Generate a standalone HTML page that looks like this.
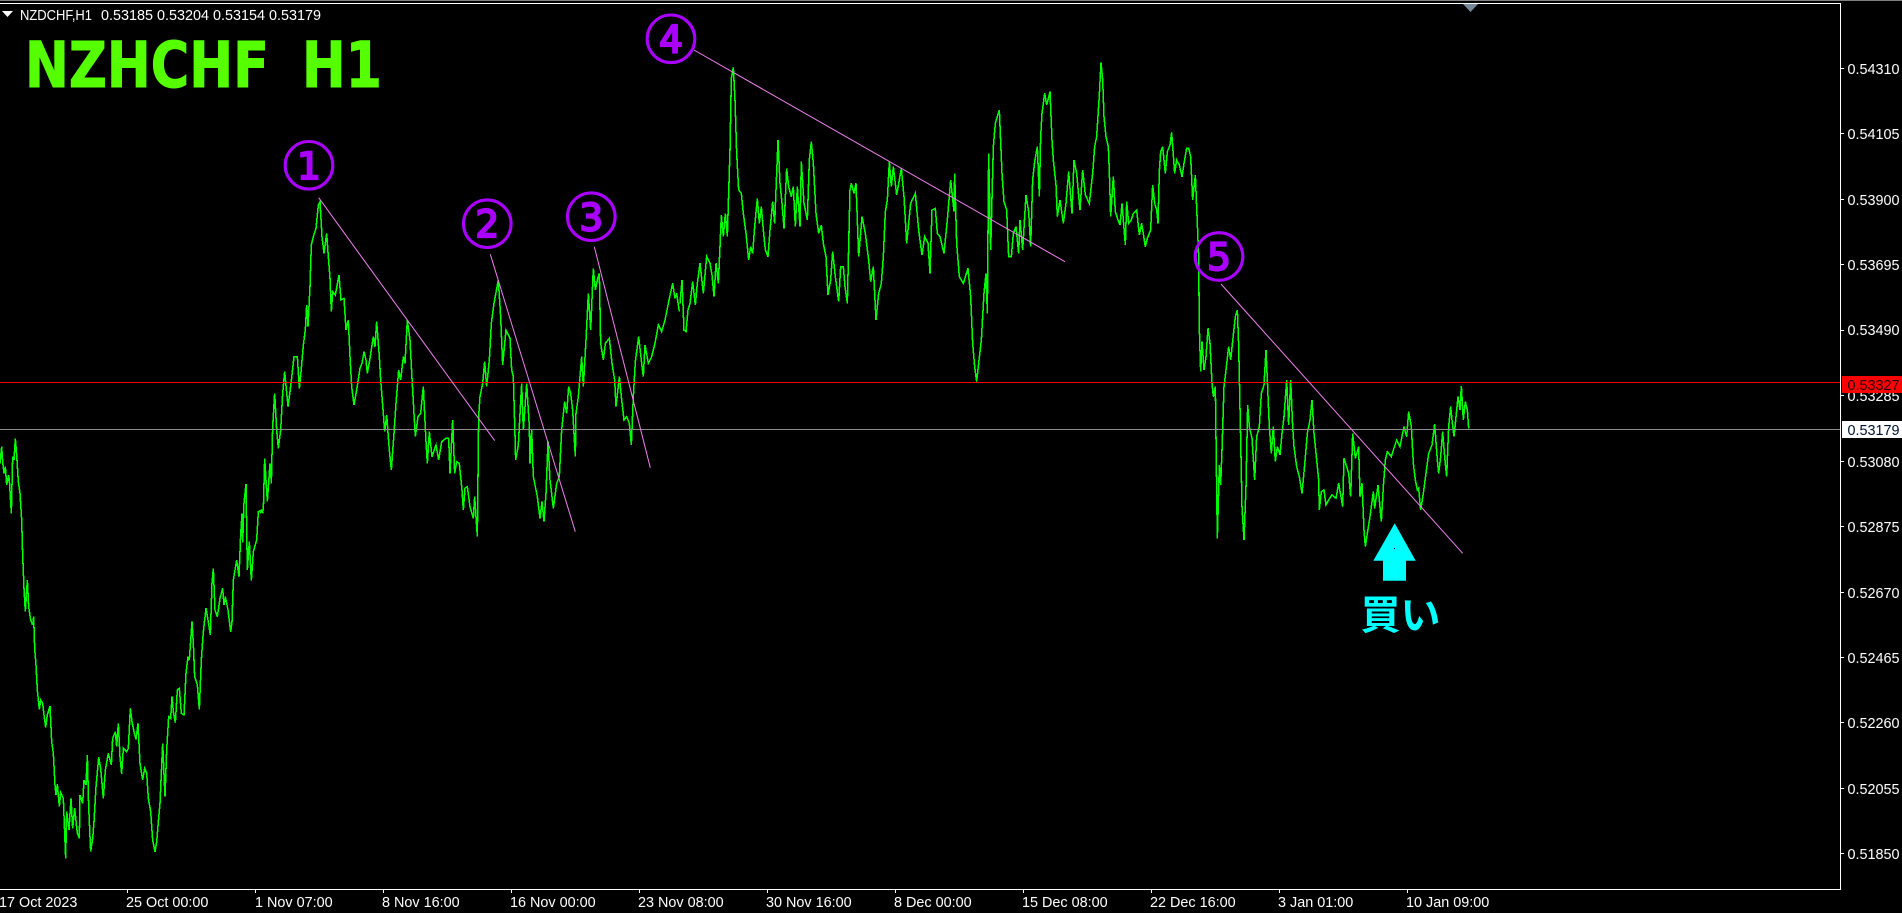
<!DOCTYPE html>
<html>
<head>
<meta charset="utf-8">
<title>NZDCHF,H1</title>
<style>
html,body{margin:0;padding:0;background:#000;width:1902px;height:913px;overflow:hidden}
svg{display:block}
.l{font-family:"Liberation Sans",sans-serif;font-size:14.4px;fill:#fff}
.d{font-family:"DejaVu Sans",sans-serif;font-size:37px;fill:#aa00ff;stroke:#aa00ff;stroke-width:2.2px;text-anchor:middle}
.g{fill:none;stroke:#00ff00;stroke-width:4.6;stroke-linejoin:miter;shape-rendering:crispEdges}
.t{stroke:#ee82ee;stroke-width:1;fill:none}
.c{fill:none;stroke:#aa00ff;stroke-width:3.1}
.k{stroke:#fff;stroke-width:1;shape-rendering:crispEdges}
.h{font-family:"DejaVu Sans",sans-serif;font-weight:700;font-size:63px;fill:#55ff00;stroke:#55ff00;stroke-width:1px}
</style>
</head>
<body>
<svg width="1902" height="913" viewBox="0 0 1902 913" xmlns="http://www.w3.org/2000/svg">
<rect width="1902" height="913" fill="#000"/>
<rect x="0" y="0" width="1902" height="1" fill="#808080"/>
<path d="M0 3.5H1840.5V889.5H0" fill="none" stroke="#fff" stroke-width="1" shape-rendering="crispEdges"/>
<polygon points="1463,4 1478,4 1470.5,12" fill="#778899"/>

<polyline class="g" transform="translate(0,420) scale(.33333)" points="0,130 5,80 8,125 12,160 16,140 20,195 26,165 28,180 34,280 38,110 42,120 46,55 50,105 55,185 60,220 65,300 68,405 72,505 76,575 82,480 86,560 92,600 98,615 101,590 104,685 108,735 112,810 118,868 122,840 128,850 132,885 137,922 142,885 150,858 155,965 160,1000 165,1095 168,1125 172,1092 178,1160 182,1118 190,1135 197,1315 200,1175 207,1230 213,1135 218,1225 224,1165 232,1240 238,1255 240,1125 248,1150 252,1080 258,1095 262,1005 266,1160 272,1295 278,1255 282,1205 288,1100 296,1012 302,1045 310,1135 316,1050 325,1000 334,1035 338,955 346,935 350,980 355,910 360,1010 365,1062 370,985 380,995 385,985 391,865 396,905 402,935 408,958 414,910 420,1030 428,1080 434,1045 440,1060 445,1135 452,1175 458,1260 465,1295 470,1265 475,1205 480,1150 488,970 495,1130 500,990 506,890 512,895 516,830 520,875 526,908 532,810 538,805 544,880 552,885 558,760 564,710 568,720 576,605 580,670 584,770 592,795 598,868 604,720 610,635 618,565 624,600 631,645 636,490 640,445 645,570 652,590 660,535 668,505 672,555 676,530 684,570 692,635 696,605 700,480 710,420 717,470 722,345 726,280 728,368 732,250 738,192 742,450 748,365 754,482 760,395 770,360 775,275 785,270 790,280"/>

<polyline class="g" transform="translate(260,130) scale(.33333)" points="0,1150 10,1140 14,985 22,1115 30,1000 34,1060 38,890 44,790 50,900 55,955 62,900 68,790 74,725 84,830 90,785 96,735 102,680 112,680 118,775 124,715 130,645 136,600 140,525 144,590 150,470 154,345 160,320 168,295 175,225 180,215 186,320 192,370 200,310 205,380 210,445 214,545 218,485 226,495 237,435 243,510 252,505 258,600 265,570 270,680 275,770 282,825 290,780 300,715 306,700 312,665 318,690 322,730 330,685 340,620 345,650 350,575 358,680 362,750 370,850 374,905 380,855 388,960 394,1020 402,910 408,820 416,720 422,750 430,680 435,700 442,570 450,630 456,745 462,850 466,920 474,860 482,850 490,770 498,935 502,1000 508,905 516,980 528,945 536,990 545,935 558,925 566,925 570,1030 578,870 584,1030 590,995 598,1000 606,1080 610,1140 615,1075 622,1070 630,1130 640,1165 644,1100 652,1220 656,860 660,800 668,760 674,695 680,770 688,690 694,580 702,520 715,450 722,560 728,705 738,600 750,625 755,720 760,740 764,880 767,990 775,945 785,760 790,900 800,760 808,890 810,1000 815,900 820,1040 832,1100 840,1165 846,1115 852,1175 858,1090 864,935 870,1050 876,1100 880,1135 890,1060 898,1040 905,900 914,815 920,850 926,770 932,790 938,840 946,980 948,850 955,800 965,680 970,770 978,630 985,490 992,600 1000,415 1006,480 1012,450 1018,430 1022,640 1030,690 1036,640 1048,625 1056,700 1064,750 1068,830 1078,740 1084,800 1092,870 1100,860 1108,880 1114,945 1120,800 1126,695 1136,620 1145,700 1150,740 1155,645 1165,700 1175,680 1185,640 1195,585 1205,605 1215,570 1225,520 1238,460 1245,505 1250,490 1258,545"/>

<polyline class="g" transform="translate(680,30) scale(.33333)" points="0,820 6,750 12,900 18,905 24,840 30,820 38,755 46,825 52,760 60,700 70,790 80,680 90,700 96,735 102,800 108,700 115,760 120,650 124,555 130,620 136,550 142,620 150,360 154,145 160,112 165,210 170,370 176,480 184,490 190,550 198,610 206,690 212,650 218,670 224,590 232,505 238,580 244,530 250,600 256,660 264,680 270,600 278,515 284,580 294,330 300,460 306,520 312,595 320,415 326,470 334,500 340,470 346,590 352,470 360,590 364,395 372,520 382,570 388,390 394,335 400,400 408,550 416,610 424,585 430,640 438,680 444,795 452,750 458,665 466,740 476,815 482,710 490,710 495,770 502,820 510,480 514,460 522,490 528,460 536,680 546,560 556,610 566,690 572,755 580,710 588,870 596,790 604,760 610,680 616,545 622,510 628,395 634,470 640,410 650,495 664,415 672,500 680,640 692,520 706,490 716,600 726,675 734,620 744,640 750,730 756,540 766,535 772,610 780,620 792,670 802,570 812,450 822,545 824,430 830,640 838,740 850,760 864,715 872,800 878,940 884,1010 890,1055 896,1000 904,930 912,790 918,730 922,850 926,370 932,660 940,350 946,280 958,240 966,430 972,515 980,540 986,680 994,680 1000,610 1008,590 1016,670 1020,570 1028,660 1038,495 1046,545 1052,650 1058,450 1064,395 1072,350 1078,500 1082,320 1086,250 1094,190 1100,225 1110,185 1116,330 1120,390 1128,465 1132,560 1140,510 1150,580 1158,520 1166,425 1176,550 1182,390 1190,430 1200,540 1208,420 1216,495 1228,520 1238,430 1244,350 1250,320 1258,195"/>

<polyline class="g" transform="translate(1000,50) scale(.33333)" points="298,135 303,38 308,90 312,200 318,260 325,290 328,365 332,500 340,380 346,485 354,510 360,525 366,460 376,585 380,455 386,520 394,510 400,490 410,480 418,555 425,520 436,590 442,565 452,540 458,405 464,460 470,480 474,520 478,365 482,305 488,290 496,370 502,305 510,285 515,247 524,370 530,330 538,345 546,380 552,340 560,295 566,295 572,320 578,450 586,375 592,520 596,620 598,840"/>

<polyline class="g" transform="translate(1180,220) scale(.33333)" points="58,325 62,455 66,365 72,450 78,410 84,325 90,370 96,490 100,530 106,500 112,955 118,735 122,795 126,690 132,500 138,450 146,380 152,420 160,345 166,290 172,270 176,375 182,660 186,860 192,960 198,800 203,555 208,620 216,655 224,780 230,650 238,620 244,520 252,495 258,390 262,480 268,620 274,700 280,620 286,725 292,680 300,705 306,640 312,590 320,480 326,615 332,480 338,620 342,680 350,740 358,770 366,820 374,735 382,640 390,600 396,540 402,640 408,700 416,780 418,870 424,815 432,810 438,855 446,840 456,825 468,835 476,790 488,860 492,715 500,740 506,760 512,830 518,640 526,715 536,680 540,830 546,790 552,930 556,980 562,940 570,890 580,815 584,865 594,795 604,905 610,800 616,720 622,695 634,710 640,690 650,660 660,680 672,620 680,650 686,575 694,620 700,730 706,780 712,810 716,805 722,870 730,820 738,760 746,700 756,675 764,612 772,720 776,760 782,710 788,635 794,710 800,770 806,620 812,560 816,600 822,650 828,590 834,530 840,570 844,498 850,600 856,545 862,570 866,625"/>

<rect x="0" y="382" width="1840" height="1" fill="#ff0000"/>
<rect x="0" y="429" width="1840" height="1" fill="#8a8a8a"/>

<line class="t" x1="318.7" y1="197.7" x2="494.7" y2="440.7"/>
<line class="t" x1="490.3" y1="254.3" x2="575.3" y2="531.7"/>
<line class="t" x1="594.3" y1="246.7" x2="650.3" y2="467.7"/>
<line class="t" x1="694" y1="50" x2="1065" y2="261.7"/>
<line class="t" x1="1221" y1="284" x2="1462.7" y2="553.3"/>

<circle class="c" cx="309" cy="165.3" r="23.8"/>
<text class="d" x="309" y="179">1</text>
<circle class="c" cx="487.3" cy="223.7" r="23.8"/>
<text class="d" x="487.3" y="237">2</text>
<circle class="c" cx="591.3" cy="216.7" r="23.8"/>
<text class="d" x="591.3" y="230.5">3</text>
<circle class="c" cx="671" cy="38.8" r="23.8"/>
<text class="d" x="671" y="52.5">4</text>
<circle class="c" cx="1219" cy="256.5" r="23.8"/>
<text class="d" x="1219" y="270">5</text>

<polygon points="1394.7,523.3 1415.7,560.7 1406,560.7 1406,580.7 1383,580.7 1383,560.7 1373.3,560.7" fill="#00ffff"/>
<rect x="1394" y="548" width="1" height="1" fill="#000"/>
<text x="1360.5" y="629" font-family="'Liberation Sans','Noto Sans CJK JP',sans-serif" font-weight="700" font-size="40" fill="#00ffff">買い</text>

<text class="h" x="25" y="87" textLength="244" lengthAdjust="spacingAndGlyphs">NZHCHF</text>
<text class="h" x="302" y="87" textLength="80" lengthAdjust="spacingAndGlyphs">H1</text>

<polygon points="2,11 13,11 7.5,17" fill="#fff"/>
<text class="l" x="20" y="20" textLength="72" lengthAdjust="spacingAndGlyphs">NZDCHF,H1</text>
<text class="l" x="101" y="20">0.53185</text>
<text class="l" x="157" y="20">0.53204</text>
<text class="l" x="213" y="20">0.53154</text>
<text class="l" x="269" y="20">0.53179</text>

<path class="k" d="M1841 68.5H1844M1841 133.5H1844M1841 199.5H1844M1841 264.5H1844M1841 330.5H1844M1841 395.5H1844M1841 461.5H1844M1841 526.5H1844M1841 592.5H1844M1841 657.5H1844M1841 722.5H1844M1841 788.5H1844M1841 853.5H1844"/>
<text class="l" x="1847.5" y="74">0.54310</text>
<text class="l" x="1847.5" y="139">0.54105</text>
<text class="l" x="1847.5" y="205">0.53900</text>
<text class="l" x="1847.5" y="270">0.53695</text>
<text class="l" x="1847.5" y="335">0.53490</text>
<text class="l" x="1847.5" y="401">0.53285</text>
<text class="l" x="1847.5" y="467">0.53080</text>
<text class="l" x="1847.5" y="532">0.52875</text>
<text class="l" x="1847.5" y="598">0.52670</text>
<text class="l" x="1847.5" y="663">0.52465</text>
<text class="l" x="1847.5" y="728">0.52260</text>
<text class="l" x="1847.5" y="794">0.52055</text>
<text class="l" x="1847.5" y="859">0.51850</text>

<rect x="1842" y="376" width="60" height="17" fill="#ff0000"/>
<text class="l" x="1847.5" y="390" style="fill:#200000">0.53327</text>
<rect x="1842" y="421" width="60" height="17" fill="#ffffff"/>
<text class="l" x="1847.5" y="435" style="fill:#001030">0.53179</text>

<path class="k" d="M127.5 889V893M255.5 889V893M383.5 889V893M511.5 889V893M639.5 889V893M767.5 889V893M895.5 889V893M1023.5 889V893M1151.5 889V893M1279.5 889V893M1407.5 889V893"/>
<text class="l" x="-1" y="907">17 Oct 2023</text>
<text class="l" x="126" y="907">25 Oct 00:00</text>
<text class="l" x="255" y="907">1 Nov 07:00</text>
<text class="l" x="382" y="907">8 Nov 16:00</text>
<text class="l" x="510" y="907">16 Nov 00:00</text>
<text class="l" x="638" y="907">23 Nov 08:00</text>
<text class="l" x="766" y="907">30 Nov 16:00</text>
<text class="l" x="894" y="907">8 Dec 00:00</text>
<text class="l" x="1022" y="907">15 Dec 08:00</text>
<text class="l" x="1150" y="907">22 Dec 16:00</text>
<text class="l" x="1278" y="907">3 Jan 01:00</text>
<text class="l" x="1406" y="907">10 Jan 09:00</text>
</svg>
</body>
</html>
